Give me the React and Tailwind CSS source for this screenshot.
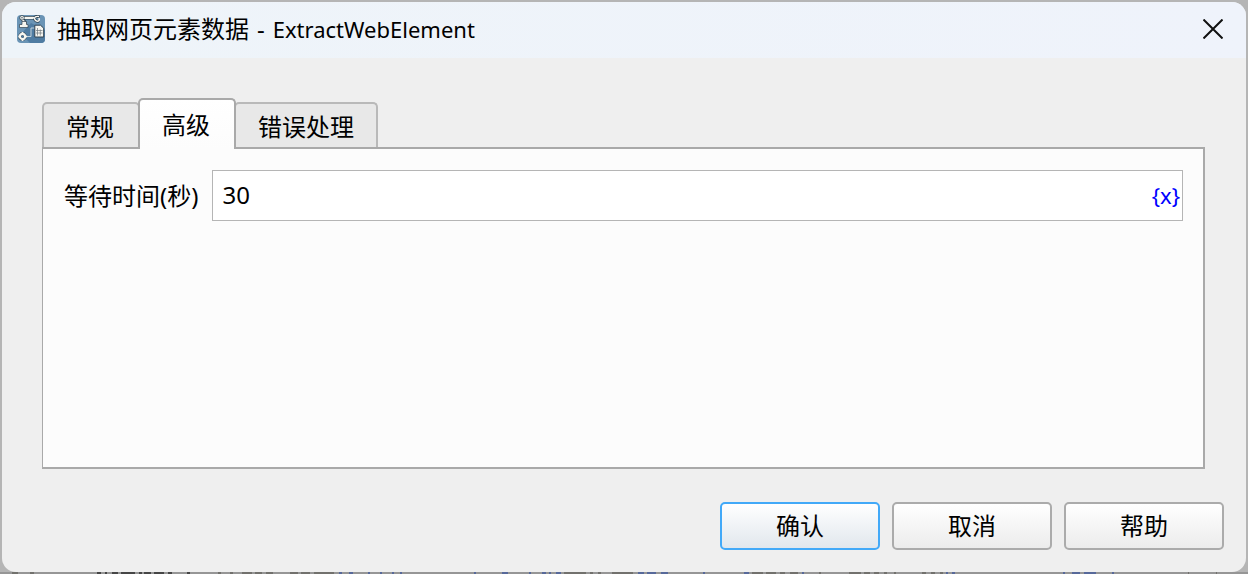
import React, { useState } from 'react';

const TABS = ['常规', '高级', '错误处理'];

const INK = '#2b2b2b';
const BLUE = '#41599b';
const GREY = '#66645f';

// [start, end, colour] of the text tops that show under the dialog
const MARKS = [
  [12, 18, GREY], [30, 34, GREY], [97, 101, INK], [105, 107, INK], [112, 118, INK], [121, 135, INK],
  [139, 142, INK], [144, 151, INK], [154, 164, INK], [168, 172, INK], [187, 190, INK],
  [218, 221, GREY], [230, 233, GREY], [242, 252, GREY], [255, 262, GREY], [266, 273, GREY],
  [290, 298, GREY], [301, 310, GREY], [314, 334, GREY], [339, 342, BLUE], [349, 353, BLUE],
  [368, 370, BLUE], [380, 382, BLUE], [392, 394, BLUE], [400, 402, BLUE], [474, 476, BLUE],
  [502, 508, BLUE], [529, 531, BLUE], [542, 546, BLUE], [549, 551, BLUE], [556, 561, BLUE],
  [564, 586, GREY], [590, 593, GREY], [598, 601, GREY], [612, 633, GREY], [638, 644, BLUE],
  [647, 656, BLUE], [661, 668, BLUE], [703, 705, BLUE], [744, 749, BLUE], [752, 763, GREY],
  [766, 776, GREY], [780, 785, GREY], [790, 798, GREY], [802, 804, BLUE], [819, 821, GREY],
  [849, 861, GREY], [864, 870, GREY], [874, 879, GREY], [884, 887, GREY], [894, 896, GREY],
  [922, 926, GREY], [931, 935, GREY], [940, 943, GREY], [946, 948, BLUE], [952, 955, BLUE],
  [1063, 1065, BLUE], [1072, 1080, BLUE], [1084, 1096, BLUE], [1112, 1114, BLUE],
  [1188, 1189, GREY], [1216, 1217, GREY],
];

function UnderlyingText() {
  return (
    <svg viewBox="0 0 1248 2" preserveAspectRatio="none" className="-mx-0.5 h-0.5 shrink-0" aria-hidden="true">
      <rect width="1248" height="2" fill="#969696" />
      {MARKS.map(([from, to, fill]) => (
        <rect key={from} x={from} y="0" width={to - from} height="2" fill={fill} opacity="0.75" />
      ))}
    </svg>
  );
}

function AppIcon() {
  return (
    <svg viewBox="0 0 28 28" className="h-7 w-7 shrink-0" aria-hidden="true">
      <rect width="28" height="28" rx="4" fill="#6a94b5" />
      <path d="M14 8 L28 15 V24 a4 4 0 0 1-4 4 H13 L4 19 Z" fill="#4f7ca2" />
      <g stroke="#2f4251" strokeWidth="3.6" fill="none" strokeLinecap="round" strokeLinejoin="round">
        <path d="M5 2.800 H16 M5 3 L8 8" />
        <path d="M21.500 1.500 q-4-0.500-4 2.300 q1 2.700 3.500 2.500" strokeWidth="3" />
      </g>
      <g stroke="#f6f6f0" strokeWidth="2.300" fill="none" strokeLinecap="round" strokeLinejoin="round">
        <path d="M5 2.800 H16 M5 3.500 L7.500 8" />
        <path d="M21.500 1.500 q-4-0.500-4 2.300 q1 2.700 3.500 2.500 M22 3.500 q1 1.500-0.500 2.500" strokeWidth="1.400" />
      </g>
      <circle cx="5" cy="2.800" r="2.300" fill="#f6f6f0" stroke="#2f4251" strokeWidth="0.800" />
      <circle cx="5" cy="2.800" r="0.700" fill="#2f4251" />
      <path d="M5 6.500 h4.500 v3 h1.500 v3 h-8.500 v-3 h2.500 z" fill="#f6f6f0" stroke="#2f4251" strokeWidth="0.700" />
      <path d="M10 21.500 h4 v-8.500 h4" fill="none" stroke="#c3d3dc" strokeWidth="1" />
      <circle cx="5.500" cy="21.500" r="2.800" fill="#4f7ca2" stroke="#2f4251" strokeWidth="3.200" />
      <path d="M5.500 17 v2 M5.500 24 v2 M1.300 21.500 h2 M8 21.500 h2" stroke="#f6f6f0" strokeWidth="1.800" />
      <circle cx="5.500" cy="21.500" r="2.600" fill="none" stroke="#f6f6f0" strokeWidth="2.100" />
      <path d="M17.800 10.200 h5.700 l3.200 3 v8.800 h-8.900 z" fill="#f6f6f0" stroke="#2f4251" strokeWidth="1" />
      <path d="M20.500 13 v7.500 M23.300 14.500 v6 M19 15.500 h6.500 M19 18 h6.500" stroke="#6b777e" strokeWidth="0.700" />
    </svg>
  );
}

function TitleBar() {
  return (
    <header className="flex h-14 items-center bg-linear-to-r from-[#eef4f9] to-[#eff3fb] pr-[19px] pb-0.5 pl-[15px]">
      <AppIcon />
      <h1 className="ml-3 flex flex-1 items-baseline gap-2 text-2xl leading-8 font-normal">
        <span>抽取网页元素数据</span>
        <span>-</span>
        <span className="text-[22px]">ExtractWebElement</span>
      </h1>
      <button type="button" aria-label="关闭" className="flex h-7 w-7 items-center justify-center">
        <svg viewBox="0 0 20 20" className="h-5 w-5" aria-hidden="true">
          <path d="M0.500 0.500 L19.500 19.500 M19.500 0.500 L0.500 19.500" stroke="#111" strokeWidth="2" />
        </svg>
      </button>
    </header>
  );
}

function Tab({ label, selected, onSelect }) {
  const look = selected
    ? 'relative z-10 -mx-0.5 h-[51px] border-[#a9a9a9] bg-linear-to-b from-white to-[#fcfcfc]'
    : 'mb-0.5 h-[45px] border-[#b9b9b9] bg-[#e8e8e8] pt-0.5';
  return (
    <button
      type="button"
      role="tab"
      aria-selected={selected}
      onClick={onSelect}
      className={`rounded-t-[5px] border-2 border-b-0 pr-6 pl-[22px] leading-8 last:pr-[22px] ${look}`}
    >
      {label}
    </button>
  );
}

function DialogButton({ children, primary }) {
  const look = primary
    ? 'border-[#42a9f8] to-[#e1e7ed]'
    : 'border-[#ababab] to-[#ececec]';
  return (
    <button type="button" className={`h-12 w-40 rounded-[5px] border-2 bg-linear-to-b from-white leading-8 ${look}`}>
      {children}
    </button>
  );
}

export default function App() {
  const [tab, setTab] = useState(1);
  return (
    <div className="flex min-h-screen flex-col overflow-hidden bg-[#b5b5b5] px-0.5 pt-0.5 font-['Noto_Sans','Noto_Sans_CJK_SC',sans-serif] text-2xl text-black">
      <main role="dialog" className="flex flex-1 flex-col overflow-hidden rounded-[14px] bg-[#efefef]">
        <TitleBar />
        <div className="flex flex-1 flex-col pt-10 pr-[41px] pl-10">
          <div role="tablist" className="-mb-0.5 flex items-end">
            {TABS.map((label, i) => (
              <Tab key={label} label={label} selected={tab === i} onSelect={() => setTab(i)} />
            ))}
          </div>
          <section role="tabpanel" className="flex-1 border-2 border-l border-[#a9a9a9] bg-[#fcfcfc] py-[21px] pr-5 pl-[21px]">
            <div className="flex items-center gap-[14px]">
              <label htmlFor="wait" className="leading-8">等待时间(秒)</label>
              <div className="flex h-[51px] flex-1 items-center border border-[#b5b5b5] bg-white pr-0.5 pb-0.5 pl-[9px]">
                <input id="wait" defaultValue="30" className="min-w-0 flex-1 bg-transparent leading-8 outline-none" />
                <button type="button" aria-label="插入变量" className="text-[22px] leading-8 text-[#0000ff]">{'{x}'}</button>
              </div>
            </div>
          </section>
        </div>
        <footer className="flex justify-end gap-3 px-[22px] pt-[33px] pb-[22px]">
          <DialogButton primary>确认</DialogButton>
          <DialogButton>取消</DialogButton>
          <DialogButton>帮助</DialogButton>
        </footer>
      </main>
      <UnderlyingText />
    </div>
  );
}
